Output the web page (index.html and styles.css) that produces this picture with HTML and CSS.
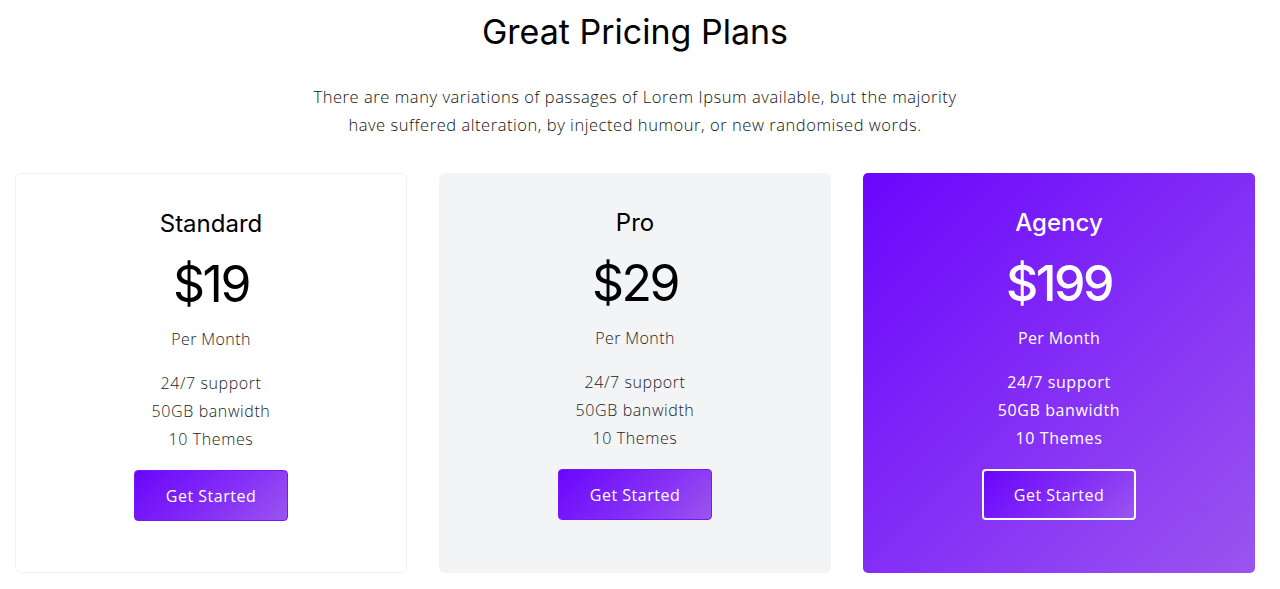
FILE: index.html
```html
<!DOCTYPE html>
<html>
<head>
<meta charset="utf-8">
<link rel="stylesheet" href="styles.css">
</head>
<body>
<section class="pricing">
  <h1 class="title">Great Pricing Plans</h1>
  <p class="lead">There are many variations of passages of Lorem Ipsum available, but the majority<br>have suffered alteration, by injected humour, or new randomised words.</p>
  <div class="plans">
    <div class="plan plan-standard">
      <h3 class="plan-name">Standard</h3>
      <div class="plan-price">$19</div>
      <div class="plan-period">Per Month</div>
      <ul class="plan-features">
        <li>24/7 support</li>
        <li>50GB banwidth</li>
        <li>10 Themes</li>
      </ul>
      <a class="btn">Get Started</a>
    </div>
    <div class="plan plan-pro">
      <h3 class="plan-name">Pro</h3>
      <div class="plan-price">$29</div>
      <div class="plan-period">Per Month</div>
      <ul class="plan-features">
        <li>24/7 support</li>
        <li>50GB banwidth</li>
        <li>10 Themes</li>
      </ul>
      <a class="btn">Get Started</a>
    </div>
    <div class="plan plan-agency">
      <h3 class="plan-name">Agency</h3>
      <div class="plan-price">$199</div>
      <div class="plan-period">Per Month</div>
      <ul class="plan-features">
        <li>24/7 support</li>
        <li>50GB banwidth</li>
        <li>10 Themes</li>
      </ul>
      <a class="btn btn-outline">Get Started</a>
    </div>
  </div>
</section>
</body>
</html>
```
FILE: styles.css
```css
* { box-sizing: border-box; }
html, body { margin: 0; padding: 0; background: #fff; }
body { font-family: "Open Sans", "Lato", sans-serif; color: #222; }

.pricing { padding: 12px 15px 0; width: 1270px; }

.title {
  margin: 0;
  text-align: center;
  font-family: "Inter", sans-serif;
  font-weight: 400;
  font-size: 34px;
  line-height: 40px;
  color: #000;
}

.lead {
  margin: 31px 0 0;
  text-align: center;
  font-size: 16.5px;
  font-weight: 300;
  line-height: 28px;
  letter-spacing: 0.55px;
  color: #111;
}

.plans {
  margin-top: 34px;
  display: grid;
  grid-template-columns: repeat(3, 1fr);
  column-gap: 32px;
}

.plan {
  height: 400px;
  border-radius: 6px;
  text-align: center;
  padding-top: 35px;
  display: flex;
  flex-direction: column;
  align-items: center;
}

.plan-standard { border: 1px solid #f1f1f3; background: #fff; }
.plan-pro { background: #f3f4f6; }
.plan-agency {
  background: linear-gradient(135deg, #6a06fc 0%, #8631f6 55%, #9a55ef 100%);
  color: #fff;
  border-radius: 5px;
}

.plan-name {
  margin: 0;
  font-family: "Inter", sans-serif;
  font-weight: 400;
  font-size: 24px;
  line-height: 30px;
  color: #000;
}
.plan-agency .plan-name { color: #fff; font-weight: 500; }

.plan-price {
  margin-top: 15px;
  font-family: "Inter", sans-serif;
  font-size: 50px;
  line-height: 60px;
  font-weight: 400;
  color: #000;
  letter-spacing: -2.5px;
}
.plan-agency .plan-price { color: #fff; font-weight: 500; }

.plan-period {
  margin-top: 11px;
  font-size: 16px;
  font-weight: 300;
  line-height: 28px;
  letter-spacing: 0.4px;
  color: #222;
}
.plan-agency .plan-period { color: #fff; font-weight: 400; }

.plan-features {
  list-style: none;
  margin: 16px 0 0;
  padding: 0;
  font-size: 16px;
  font-weight: 300;
  line-height: 28px;
  letter-spacing: 0.6px;
  color: #222;
}
.plan-agency .plan-features { color: #fff; font-weight: 400; }

.btn {
  margin-top: 17px;
  display: flex;
  align-items: center;
  justify-content: center;
  width: 154px;
  height: 51px;
  border-radius: 4px;
  border: 1px solid #7419f7;
  background: linear-gradient(135deg, #6a06fc 0%, #8631f6 60%, #9a55ef 100%);
  color: #fff;
  font-size: 16px;
  font-weight: 400;
  letter-spacing: 0.5px;
  text-decoration: none;
}
.btn-outline { border: 2px solid #fff; }
```
